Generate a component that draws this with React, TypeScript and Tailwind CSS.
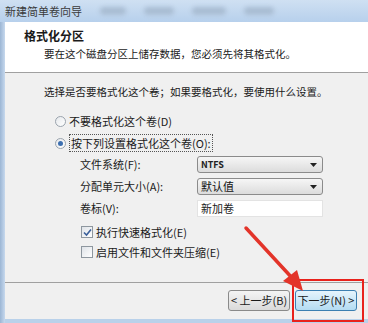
const font = { fontFamily: '"Noto Sans CJK SC", "Noto Sans", sans-serif' };

function Radio({ checked }: { checked?: boolean }) {
  return (
    <span className="w-[11px] h-[11px] rounded-full border border-[#9aa3ad] bg-gradient-to-br from-[#e6e9ec] to-white flex items-center justify-center shrink-0">
      {checked && <span className="w-[5px] h-[5px] rounded-full bg-[#3c6fb0]" />}
    </span>
  );
}

function Check({ checked }: { checked?: boolean }) {
  return (
    <span className="w-[12px] h-[12px] border border-[#8e979f] bg-gradient-to-br from-[#dfe3e8] to-white flex items-center justify-center shrink-0">
      {checked && (
        <svg width="9" height="9" viewBox="0 0 9 9">
          <path d="M1 4.5 L3.5 7 L8 1.5" stroke="#3a5f9a" strokeWidth="1.6" fill="none" />
        </svg>
      )}
    </span>
  );
}

function Select({ value, mono }: { value: string; mono?: boolean }) {
  return (
    <div className="w-[126px] h-[17px] rounded-[3px] border border-[#8b8b8b] bg-gradient-to-b from-[#f6f6f6] to-[#dcdcdc] flex items-center justify-between pl-[3px] pr-[5px]">
      <span className={mono ? "text-[9px] font-bold text-[#222]" : "text-[11px] text-[#111]"}>{value}</span>
      <svg width="7" height="4" viewBox="0 0 7 4">
        <path d="M0 0 H7 L3.5 4 Z" fill="#222" />
      </svg>
    </div>
  );
}

export default function App() {
  return (
    <div className="relative w-[368px] h-[323px] overflow-hidden flex flex-col bg-[#f0f0f0] text-[#1a1a1a]" style={font}>
      <div className="h-[22px] bg-gradient-to-b from-[#cfe0f2] to-[#b7d0ec] flex items-center pl-[5px] gap-[18px]">
        <span className="text-[11px] text-[#3a3a3a]">新建简单卷向导</span>
        <span className="h-[8px] w-[26px] bg-[#a9bdd3] rounded blur-[2px]" />
        <span className="h-[8px] w-[30px] bg-[#a9bdd3] rounded blur-[2px]" />
        <span className="h-[8px] w-[34px] bg-[#a9bdd3] rounded blur-[2px]" />
        <span className="h-[8px] w-[30px] bg-[#a9bdd3] rounded blur-[2px]" />
      </div>
      <div className="flex-1 flex">
        <div className="w-[5px] bg-gradient-to-r from-[#9cb6d4] to-[#c7d9ee]" />
        <div className="flex-1 flex flex-col">
          <div className="h-[51px] bg-white border-b border-[#a0a0a0] pl-[19px] pt-[6px]">
            <div className="text-[12px] font-bold leading-[16px]">格式化分区</div>
            <div className="text-[10.5px] leading-[16px] pl-[20px] pt-[2px]">要在这个磁盘分区上储存数据，您必须先将其格式化。</div>
          </div>
          <div className="flex-1 flex flex-col pl-[39px] pt-[11px]">
            <div className="text-[10.5px] leading-[16px]">选择是否要格式化这个卷；如果要格式化，要使用什么设置。</div>
            <div className="pl-[11px] pt-[13px] flex flex-col gap-[5px]">
              <div className="flex items-center gap-[3px] text-[11px] leading-[16px]">
                <Radio />
                <span>不要格式化这个卷(D)</span>
              </div>
              <div className="flex items-center gap-[3px] text-[11px] leading-[16px]">
                <Radio checked />
                <span className="border border-dotted border-[#555] px-[1px]">按下列设置格式化这个卷(O):</span>
              </div>
            </div>
            <div className="pl-[36px] pt-[4px] flex flex-col gap-[5px]">
              <div className="flex items-center">
                <span className="w-[117px] text-[11px]">文件系统(F):</span>
                <Select value="NTFS" mono />
              </div>
              <div className="flex items-center">
                <span className="w-[117px] text-[11px]">分配单元大小(A):</span>
                <Select value="默认值" />
              </div>
              <div className="flex items-center">
                <span className="w-[117px] text-[11px]">卷标(V):</span>
                <div className="w-[126px] h-[17px] bg-white border border-[#e3e3e3] text-[11px] pl-[3px] leading-[15px]">新加卷</div>
              </div>
            </div>
            <div className="pl-[37px] pt-[8px] flex flex-col gap-[6px]">
              <div className="flex items-center gap-[3px] text-[11px] leading-[14px]">
                <Check checked />
                <span>执行快速格式化(E)</span>
              </div>
              <div className="flex items-center gap-[3px] text-[11px] leading-[14px]">
                <Check />
                <span>启用文件和文件夹压缩(E)</span>
              </div>
            </div>
          </div>
          <div className="h-[37px] border-t border-[#a0a0a0] flex justify-end items-start pt-[7px] pr-[11px] gap-[5px]">
            <button className="w-[62px] h-[21px] rounded-[3px] border border-[#8a8a8a] bg-gradient-to-b from-[#f4f4f4] to-[#dadada] text-[11px] leading-none">
              &lt; 上一步(B)
            </button>
            <button className="w-[62px] h-[21px] rounded-[3px] border border-[#3c7fb1] bg-gradient-to-b from-[#e5f4fc] to-[#b4dcf2] text-[11px] leading-none">
              下一步(N) &gt;
            </button>
          </div>
          <div className="h-[4px] bg-[#b9d1ea]" />
        </div>
      </div>
      <div className="absolute left-[292px] top-[279px] w-[72px] h-[43px] border-2 border-[#e8221c]" />
      <svg className="absolute left-0 top-0" width="368" height="323" viewBox="0 0 368 323">
        <line x1="246" y1="228" x2="294" y2="280" stroke="#e3342a" strokeWidth="3.5" strokeLinecap="round" />
        <path d="M303 291 L283 281 L297 270 Z" fill="#e3342a" />
      </svg>
    </div>
  );
}
